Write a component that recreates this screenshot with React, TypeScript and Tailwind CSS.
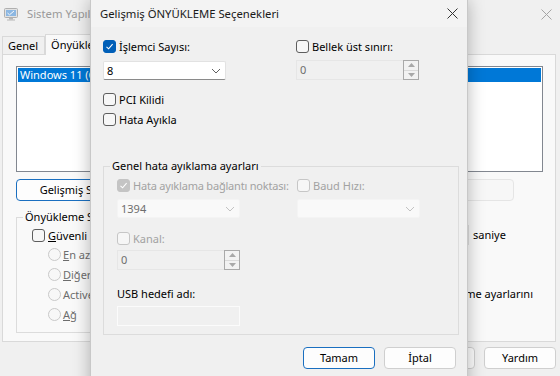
import React from "react";

function Check({ on, disabled }: { on?: boolean; disabled?: boolean }) {
  const box = on
    ? disabled
      ? "bg-[#c4c4c4] border-[#c4c4c4]"
      : "bg-[#005fb8] border-[#005fb8]"
    : disabled
    ? "bg-[#f6f6f6] border-[#c6c6c6]"
    : "bg-[#f7f7f7] border-[#5e5e5e]";
  return (
    <span className={`w-[13px] h-[13px] shrink-0 rounded-[3px] border flex items-center justify-center ${box}`}>
      {on ? (
        <svg width="9" height="9" viewBox="0 0 9 9">
          <path d="M1.5 4.8 L3.6 6.8 L7.6 2.2" fill="none" stroke="#fff" strokeWidth="1.1" />
        </svg>
      ) : null}
    </span>
  );
}

function CheckRow({ label, on, disabled }: { label: React.ReactNode; on?: boolean; disabled?: boolean }) {
  return (
    <div className="flex items-center gap-[3px] h-[13px] whitespace-nowrap">
      <Check on={on} disabled={disabled} />
      <span className={disabled ? "text-[#a2a2a2]" : "text-black"}>{label}</span>
    </div>
  );
}

function Chevron({ color }: { color: string }) {
  return (
    <svg width="10" height="6" viewBox="0 0 10 6">
      <path d="M1 1 L5 5 L9 1" fill="none" stroke={color} strokeWidth="1" />
    </svg>
  );
}

function Select({ value, disabled }: { value?: string; disabled?: boolean }) {
  return (
    <div
      className={`h-[19px] w-[123px] flex items-center justify-between pl-[3px] pr-[4px] rounded-[2px] border ${
        disabled ? "bg-[#f9f9f9] border-[#f4f4f4] text-[#6d6d6d]" : "bg-white border-[#e2e2e2] border-b-[#8a8a8a] text-black"
      }`}
    >
      <span>{value}</span>
      <Chevron color={disabled ? "#c2c2c2" : "#606060"} />
    </div>
  );
}

function Tri({ up }: { up?: boolean }) {
  return (
    <svg width="7" height="4" viewBox="0 0 7 4">
      <path d={up ? "M0 4 L3.5 0 L7 4 Z" : "M0 0 L3.5 4 L7 0 Z"} fill="#a8a8a8" />
    </svg>
  );
}

function Spin({ w }: { w: string }) {
  return (
    <div className={`h-[20px] ${w} flex border border-[#e6e6e6] bg-[#f0f0f0]`}>
      <div className="flex-1 pl-[3px] flex items-center text-[#6d6d6d]">0</div>
      <div className="w-[16px] flex flex-col -my-px -mr-px border border-[#a9a9a9]">
        <div className="flex-1 flex items-center justify-center border-b border-[#dadada] bg-[#f2f2f2]">
          <Tri up />
        </div>
        <div className="flex-1 flex items-center justify-center bg-[#f2f2f2]">
          <Tri />
        </div>
      </div>
    </div>
  );
}

function Btn({ children, primary, disabled, w = "w-[72px]" }: { children?: React.ReactNode; primary?: boolean; disabled?: boolean; w?: string }) {
  return (
    <div
      className={`${w} h-[22px] shrink-0 rounded-[4px] border flex items-center justify-center whitespace-nowrap ${
        primary ? "border-[#1a6fc0] bg-[#fdfdfd]" : disabled ? "border-[#e5e5e5] bg-[#f7f7f7] text-[#a0a0a0]" : "border-[#cfcfcf] bg-[#fdfdfd]"
      }`}
    >
      {children}
    </div>
  );
}

function Radio({ label }: { label: React.ReactNode }) {
  return (
    <div className="flex items-center gap-[2px] h-[13px] whitespace-nowrap">
      <span className="w-[13px] h-[13px] rounded-full border border-[#c9c9c9] bg-[#f7f7f7] shrink-0" />
      <span className="text-[#6d6d6d]">{label}</span>
    </div>
  );
}

function CloseX({ color }: { color: string }) {
  return (
    <svg width="11" height="11" viewBox="0 0 11 11">
      <path d="M0.5 0.5 L10.5 10.5 M10.5 0.5 L0.5 10.5" stroke={color} strokeWidth="1" />
    </svg>
  );
}

function BackWindow() {
  return (
    <div className="absolute inset-0 flex flex-col bg-[#f0f0f0]">
      <div className="h-[28px] flex items-center pl-[4px] pr-[8px] gap-[9px] text-[#9a9a9a] text-[11.3px]">
        {/* msconfig icon: small monitor */}
        <svg width="14" height="14" viewBox="0 0 14 14" className="opacity-55">
          <rect x="0.5" y="1.5" width="13" height="9" rx="1" fill="#d8d8d8" stroke="#7a7a7a" />
          <rect x="2" y="3" width="10" height="6" fill="#3c8ad8" />
          <path d="M3.5 6 L5.5 7.8 L10 4" fill="none" stroke="#fff" strokeWidth="1" />
          <rect x="5" y="11" width="4" height="1.5" fill="#8a8a8a" />
          <rect x="3" y="12.5" width="8" height="1" fill="#8a8a8a" />
        </svg>
        <span>Sistem Yapılandırması</span>
        <span className="ml-auto">
          <CloseX color="#a5a5a5" />
        </span>
      </div>
      <div className="h-[26px] flex items-end pl-[2px]">
        <div className="h-[18px] pl-[5px] pr-[6px] flex items-center border border-b-0 border-[#d9d9d9] bg-[#f0f0f0]">Genel</div>
        <div className="h-[21px] px-[5px] flex items-center border border-b-0 border-[#d9d9d9] bg-[#f9f9f9] -mb-px relative">Önyükleme</div>
      </div>
      <div className="ml-[2px] mr-[4px] h-[288px] border border-[#d9d9d9] bg-[#f9f9f9] pl-[13px] pr-[12px] pt-[11px] flex flex-col">
        <div className="h-[106px] border border-[#828790] bg-white p-px">
          <div className="h-[14px] bg-[#0078d7] text-white pl-[2px] flex items-center whitespace-nowrap overflow-hidden">
            Windows 11 (C:\Windows) : Geçerli işletim sistemi; Varsayılan işletim sistemi
          </div>
        </div>
        <div className="mt-[7px] flex items-center">
          <Btn primary w="w-[157px]">Gelişmiş Seçenekler...</Btn>
          <div className="ml-auto mr-[29px]">
            <Btn disabled w="w-[114px]">Sil</Btn>
          </div>
        </div>
        <div className="mt-[9px] flex">
          <fieldset className="w-[290px] h-[123px] border border-[#dcdcdc] pl-[15px] pt-[5px]">
            <legend className="ml-[-9px] px-[2px]">Önyükleme Seçenekleri</legend>
            <CheckRow label={<><u>G</u>üvenli Önyükleme</>} />
            <div className="pl-[16px] pt-[6px] flex flex-col gap-[7px]">
              <Radio label={<><u>E</u>n az</>} />
              <Radio label={<><u>D</u>iğer kabuk</>} />
              <Radio label="Active Directory onarımı" />
              <Radio label={<><u>A</u>ğ</>} />
            </div>
          </fieldset>
          <div className="flex-1 flex flex-col pt-[1px]">
            <div className="h-[14px] pl-[20px]">Zaman aşımı:</div>
            <div className="flex items-center gap-[4px] ml-[123px]">
              <div className="w-[40px] h-[20px] border border-[#e0e0e0] bg-white pl-[3px]">30</div>
              <span>saniye</span>
            </div>
            <div className="mt-[42px] mr-[10px] flex justify-end items-center gap-[3px] whitespace-nowrap">
              <Check />
              <span>Tüm önyükleme ayarlarını</span>
            </div>
          </div>
        </div>
      </div>
      <div className="flex justify-end gap-[9px] pr-[4px] pt-[5px]">
        <Btn>Tamam</Btn>
        <Btn>İptal</Btn>
        <Btn>Uygula</Btn>
        <Btn>Yardım</Btn>
      </div>
    </div>
  );
}

function Dialog() {
  return (
    <div className="absolute left-[90px] top-0 w-[378px] h-[400px] flex flex-col bg-[#f0f0f0] border-l border-r border-[#c8c8c8] shadow-[0_0_16px_rgba(0,0,0,0.28)]">
      <div className="h-[27px] shrink-0 flex items-center pl-[9px] pr-[9px] bg-[#f3f3f3]">
        <span className="text-[#1a1a1a] text-[11.3px]">Gelişmiş ÖNYÜKLEME Seçenekleri</span>
        <span className="ml-auto">
          <CloseX color="#333" />
        </span>
      </div>
      <div className="pl-[12px] pr-[10px] pt-[13px] flex flex-col">
        <div className="grid grid-cols-[193px_1fr]">
          <div className="flex flex-col">
            <CheckRow on label="İşlemci Sayısı:" />
            <div className="mt-[8px]">
              <Select value="8" />
            </div>
            <div className="mt-[13px]">
              <CheckRow label="PCI Kilidi" />
            </div>
            <div className="mt-[7px]">
              <CheckRow label="Hata Ayıkla" />
            </div>
          </div>
          <div className="flex flex-col">
            <CheckRow label="Bellek üst sınırı:" />
            <div className="mt-[7px]">
              <Spin w="w-[123px]" />
            </div>
          </div>
        </div>
        <fieldset className="mt-[33px] w-[356px] h-[176px] border border-[#dcdcdc] pl-[13px] pt-[6px]">
          <legend className="ml-[-7px] px-[2px]">Genel hata ayıklama ayarları</legend>
          <div className="grid grid-cols-[180px_1fr]">
            <div className="flex flex-col">
              <div className="tracking-[-0.2px]">
                <CheckRow on disabled label="Hata ayıklama bağlantı noktası:" />
              </div>
              <div className="mt-[7px]">
                <Select value="1394" disabled />
              </div>
              <div className="mt-[14px]">
                <CheckRow disabled label="Kanal:" />
              </div>
              <div className="mt-[5px]">
                <Spin w="w-[123px]" />
              </div>
              <div className="mt-[17px] h-[14px] leading-[14px]">USB hedefi adı:</div>
              <div className="mt-[5px] w-[123px] h-[20px] border border-[#fbfbfb] bg-[#f0f0f0]" />
            </div>
            <div className="flex flex-col">
              <CheckRow disabled label="Baud Hızı:" />
              <div className="mt-[7px]">
                <Select disabled />
              </div>
            </div>
          </div>
        </fieldset>
        <div className="mt-[12px] flex justify-end gap-[9px] pr-[1px]">
          <Btn primary>Tamam</Btn>
          <Btn>İptal</Btn>
        </div>
      </div>
    </div>
  );
}

export default function App() {
  return (
    <div className="relative w-[560px] h-[376px] overflow-hidden bg-[#f0f0f0] font-['Noto_Sans',sans-serif] text-[11px] leading-[14px] text-black">
      <BackWindow />
      <Dialog />
    </div>
  );
}
